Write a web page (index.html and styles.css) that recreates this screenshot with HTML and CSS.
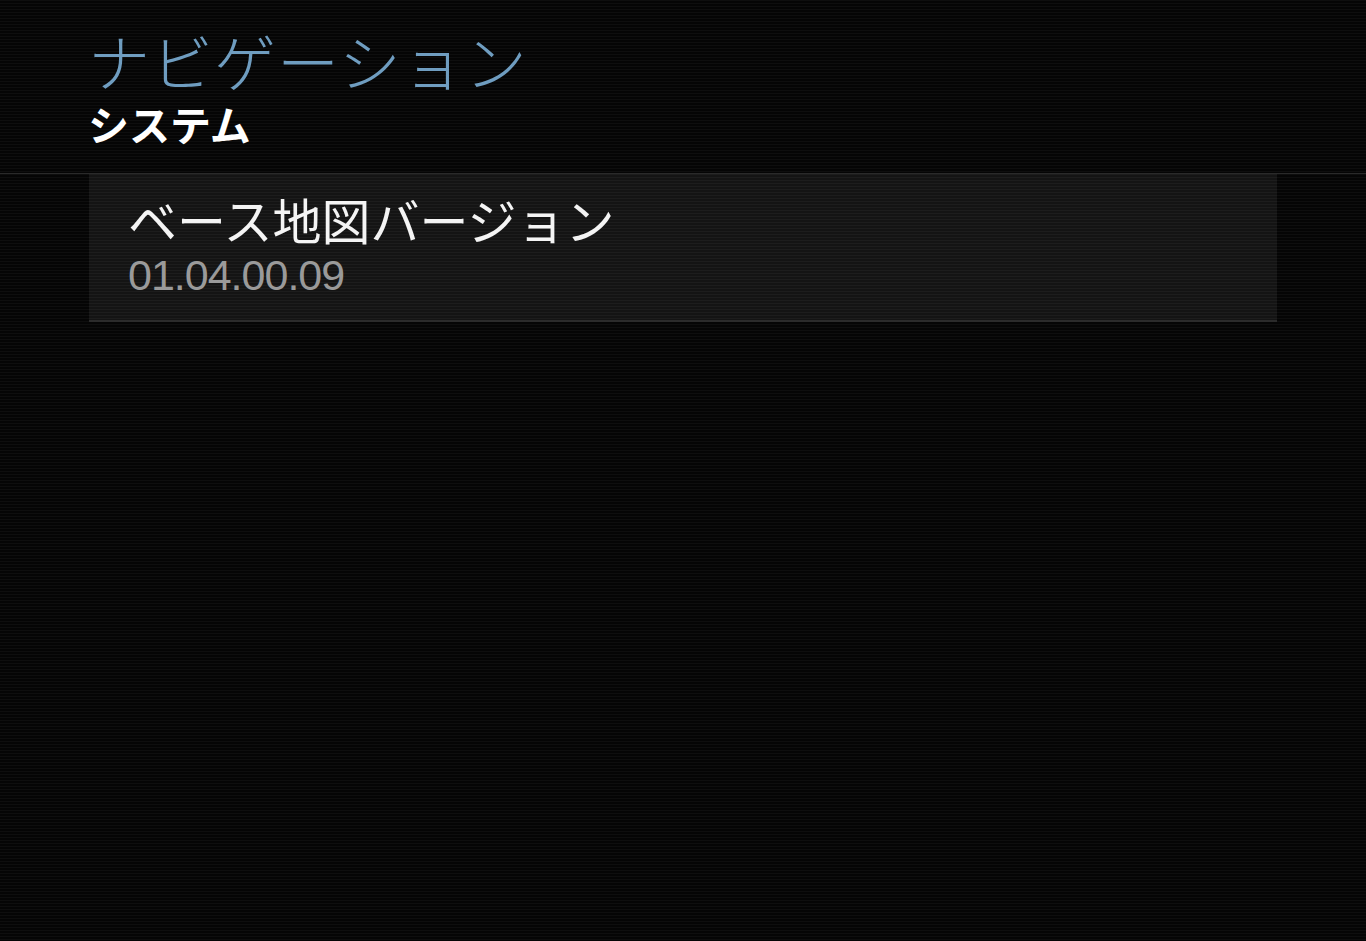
FILE: index.html
```html
<!DOCTYPE html>
<html lang="ja">
<head>
<meta charset="utf-8">
<link rel="stylesheet" href="styles.css">
</head>
<body>
<div class="screen">
  <header class="header">
    <h1 class="title">ナビゲーション</h1>
    <h2 class="subtitle">システム</h2>
  </header>
  <div class="list">
    <div class="item">
      <div class="item-label">ベース地図バージョン</div>
      <div class="item-value">01.04.00.09</div>
    </div>
  </div>
</div>
</body>
</html>
```
FILE: styles.css
```css
html, body {
  margin: 0;
  padding: 0;
  background: #060606;
}
.screen {
  width: 1366px;
  height: 941px;
  background-color: #060606;
  background-image: repeating-linear-gradient(to bottom, #0e0e0e 0px, #0e0e0e 1px, #050505 1px, #050505 3px);
  font-family: "Noto Sans CJK JP", "Noto Sans", sans-serif;
  overflow: hidden;
}
.header {
  padding: 29px 0 0 88px;
  height: 174px;
  box-sizing: border-box;
  border-bottom: 1px solid #2a2a2a;
}
.title {
  margin: 0;
  font-size: 62px;
  font-weight: 300;
  line-height: 62px;
  color: #6f9dc0;
  letter-spacing: 1px;
}
.subtitle {
  margin: 12px 0 0 0;
  font-size: 41px;
  font-weight: 700;
  line-height: 41px;
  color: #ffffff;
}
.list {
  padding: 0 89px 0 89px;
}
.item {
  height: 148px;
  box-sizing: border-box;
  background-color: #171717;
  background-image: repeating-linear-gradient(to bottom, #1d1d1d 0px, #1d1d1d 1px, #141414 1px, #141414 3px);
  border-bottom: 2px solid #2b2b2b;
  padding: 20px 0 0 39px;
}
.item-label {
  font-size: 49px;
  line-height: 49px;
  color: #f4f4f4;
  font-weight: 400;
}
.item-value {
  margin-top: 11px;
  font-family: "Liberation Sans", Arial, sans-serif;
  font-size: 43px;
  line-height: 43px;
  color: #9a9a9a;
  letter-spacing: -1px;
}
```
